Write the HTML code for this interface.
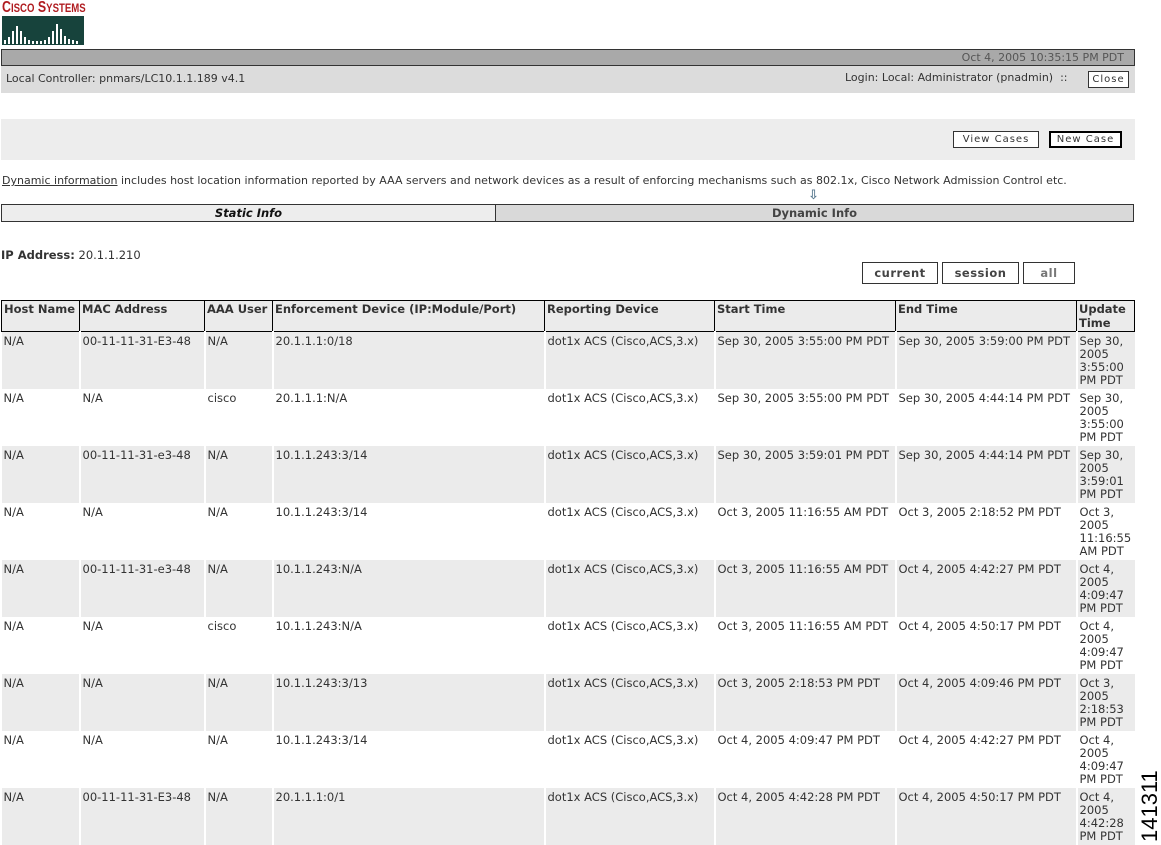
<!DOCTYPE html>
<html><head><meta charset="utf-8"><style>
*{margin:0;padding:0;box-sizing:border-box}
body{width:1161px;height:845px;overflow:hidden;background:#fff;font-family:"DejaVu Sans","Liberation Sans",sans-serif;font-size:11.5px;color:#333;position:relative}
.a{position:absolute}
.btn{position:absolute;border:1px solid #333;background:#fff;font-size:10px;letter-spacing:1px;text-align:center;color:#333}
.b2{border:2px solid #000;font-weight:bold;font-size:11.5px;letter-spacing:.5px;text-align:center;position:absolute;background:#fff;color:#444}
table{position:absolute;left:1px;top:300px;border-collapse:collapse;table-layout:fixed;width:1133px}
th{background:#ebebeb;border:1px solid #000;text-align:left;vertical-align:top;font-weight:bold;padding:1px 2px;height:31px;line-height:14px;color:#333}
td{vertical-align:top;padding:3px 2px 0;height:57px;line-height:13px;border-left:2px solid #fff;color:#333}
tr.g td{background:#ebebeb}
td:first-child{border-left:none}
</style></head><body>
<div class="a" style="left:2px;top:-1px;color:#b01c20;font-family:'Liberation Sans',sans-serif;font-weight:bold;font-size:15.5px;letter-spacing:0;transform:scaleX(.8);transform-origin:left">C<span style="font-size:12px">ISCO</span> S<span style="font-size:12px">YSTEMS</span></div>
<div class="a" style="left:2px;top:16px;width:82px;height:29px;background:#17433c"></div>
<svg class="a" style="left:2px;top:16px" width="82" height="29"><g fill="#fff">
<rect x="2" y="24" width="2" height="4"/><rect x="6" y="21" width="2" height="7"/><rect x="10" y="15" width="2" height="13"/><rect x="14" y="10" width="2" height="18"/><rect x="18" y="15" width="2" height="13"/><rect x="22" y="21" width="2" height="7"/><rect x="26" y="24" width="2" height="4"/><rect x="30" y="25" width="2" height="3"/><rect x="34" y="25" width="2" height="3"/><rect x="38" y="25" width="2" height="3"/><rect x="42" y="24" width="2" height="4"/><rect x="46" y="21" width="2" height="7"/><rect x="50" y="15" width="2" height="13"/><rect x="54" y="8" width="2" height="20"/><rect x="58" y="13" width="2" height="15"/><rect x="62" y="20" width="2" height="8"/><rect x="66" y="23" width="2" height="5"/><rect x="70" y="24" width="2" height="4"/><rect x="74" y="25" width="2" height="3"/></g></svg>
<div class="a" style="left:1px;top:49px;width:1134px;height:17px;background:#a9a9a9;border:1px solid #333;text-align:right;padding-right:10px;font-size:11px;line-height:15px;color:#555">Oct 4, 2005 10:35:15 PM PDT</div>
<div class="a" style="left:1px;top:66px;width:1134px;height:27px;background:#dcdcdc"></div>
<div class="a" style="left:6px;top:72px;font-size:11px">Local Controller: pnmars/LC10.1.1.189 v4.1</div>
<div class="a" style="left:845px;top:71px;font-size:11px">Login: Local: Administrator (pnadmin) &nbsp;::</div>
<div class="btn" style="left:1088px;top:71px;width:41px;height:17px;line-height:15px">Close</div>
<div class="a" style="left:1px;top:119px;width:1134px;height:41px;background:#ededed"></div>
<div class="btn" style="left:953px;top:131px;width:86px;height:17px;line-height:15px">View Cases</div>
<div class="btn" style="left:1049px;top:131px;width:73px;height:17px;line-height:13px;border:2px solid #000">New Case</div>
<div class="a" style="left:2px;top:174px;font-size:11px"><u>Dynamic information</u> includes host location information reported by AAA servers and network devices as a result of enforcing mechanisms such as 802.1x, Cisco Network Admission Control etc.</div>
<div class="a" style="left:808px;top:188px;color:#5a7a90;font-size:13px;font-weight:bold">⇩</div>
<div class="a" style="left:1px;top:204px;width:495px;height:18px;background:#ededed;border:1px solid #333;text-align:center;font-weight:bold;font-style:italic;line-height:16px;color:#111">Static Info</div>
<div class="a" style="left:495px;top:204px;width:639px;height:18px;background:#d9d9d9;border:1px solid #333;text-align:center;font-weight:bold;line-height:16px;color:#444">Dynamic Info</div>
<div class="a" style="left:1px;top:248px"><b>IP Address:</b> 20.1.1.210</div>
<div class="b2" style="left:862px;top:262px;width:76px;height:22px;border-width:1px;border-color:#333;line-height:20px">current</div>
<div class="b2" style="left:942px;top:262px;width:77px;height:22px;border-width:1px;border-color:#333;line-height:20px">session</div>
<div class="b2" style="left:1023px;top:262px;width:52px;height:22px;border-width:1px;border-color:#333;line-height:20px;color:#777">all</div>
<table>
<colgroup><col style="width:78px"><col style="width:125px"><col style="width:68px"><col style="width:272px"><col style="width:170px"><col style="width:181px"><col style="width:181px"><col style="width:58px"></colgroup>
<tr><th>Host Name</th><th>MAC Address</th><th>AAA User</th><th>Enforcement Device (IP:Module/Port)</th><th>Reporting Device</th><th>Start Time</th><th>End Time</th><th>Update Time</th></tr>
<tr class="g"><td>N/A</td><td>00-11-11-31-E3-48</td><td>N/A</td><td>20.1.1.1:0/18</td><td>dot1x ACS (Cisco,ACS,3.x)</td><td>Sep 30, 2005 3:55:00 PM PDT</td><td>Sep 30, 2005 3:59:00 PM PDT</td><td>Sep 30, 2005 3:55:00 PM PDT</td></tr>
<tr><td>N/A</td><td>N/A</td><td>cisco</td><td>20.1.1.1:N/A</td><td>dot1x ACS (Cisco,ACS,3.x)</td><td>Sep 30, 2005 3:55:00 PM PDT</td><td>Sep 30, 2005 4:44:14 PM PDT</td><td>Sep 30, 2005 3:55:00 PM PDT</td></tr>
<tr class="g"><td>N/A</td><td>00-11-11-31-e3-48</td><td>N/A</td><td>10.1.1.243:3/14</td><td>dot1x ACS (Cisco,ACS,3.x)</td><td>Sep 30, 2005 3:59:01 PM PDT</td><td>Sep 30, 2005 4:44:14 PM PDT</td><td>Sep 30, 2005 3:59:01 PM PDT</td></tr>
<tr><td>N/A</td><td>N/A</td><td>N/A</td><td>10.1.1.243:3/14</td><td>dot1x ACS (Cisco,ACS,3.x)</td><td>Oct 3, 2005 11:16:55 AM PDT</td><td>Oct 3, 2005 2:18:52 PM PDT</td><td>Oct 3, 2005 11:16:55 AM PDT</td></tr>
<tr class="g"><td>N/A</td><td>00-11-11-31-e3-48</td><td>N/A</td><td>10.1.1.243:N/A</td><td>dot1x ACS (Cisco,ACS,3.x)</td><td>Oct 3, 2005 11:16:55 AM PDT</td><td>Oct 4, 2005 4:42:27 PM PDT</td><td>Oct 4, 2005 4:09:47 PM PDT</td></tr>
<tr><td>N/A</td><td>N/A</td><td>cisco</td><td>10.1.1.243:N/A</td><td>dot1x ACS (Cisco,ACS,3.x)</td><td>Oct 3, 2005 11:16:55 AM PDT</td><td>Oct 4, 2005 4:50:17 PM PDT</td><td>Oct 4, 2005 4:09:47 PM PDT</td></tr>
<tr class="g"><td>N/A</td><td>N/A</td><td>N/A</td><td>10.1.1.243:3/13</td><td>dot1x ACS (Cisco,ACS,3.x)</td><td>Oct 3, 2005 2:18:53 PM PDT</td><td>Oct 4, 2005 4:09:46 PM PDT</td><td>Oct 3, 2005 2:18:53 PM PDT</td></tr>
<tr><td>N/A</td><td>N/A</td><td>N/A</td><td>10.1.1.243:3/14</td><td>dot1x ACS (Cisco,ACS,3.x)</td><td>Oct 4, 2005 4:09:47 PM PDT</td><td>Oct 4, 2005 4:42:27 PM PDT</td><td>Oct 4, 2005 4:09:47 PM PDT</td></tr>
<tr class="g"><td>N/A</td><td>00-11-11-31-E3-48</td><td>N/A</td><td>20.1.1.1:0/1</td><td>dot1x ACS (Cisco,ACS,3.x)</td><td>Oct 4, 2005 4:42:28 PM PDT</td><td>Oct 4, 2005 4:50:17 PM PDT</td><td>Oct 4, 2005 4:42:28 PM PDT</td></tr>
</table>
<div class="a" style="left:1137px;top:842px;transform:rotate(-90deg);transform-origin:left top;font-family:'Liberation Sans',sans-serif;font-size:22px;color:#000;line-height:26px">141311</div>
</body></html>
